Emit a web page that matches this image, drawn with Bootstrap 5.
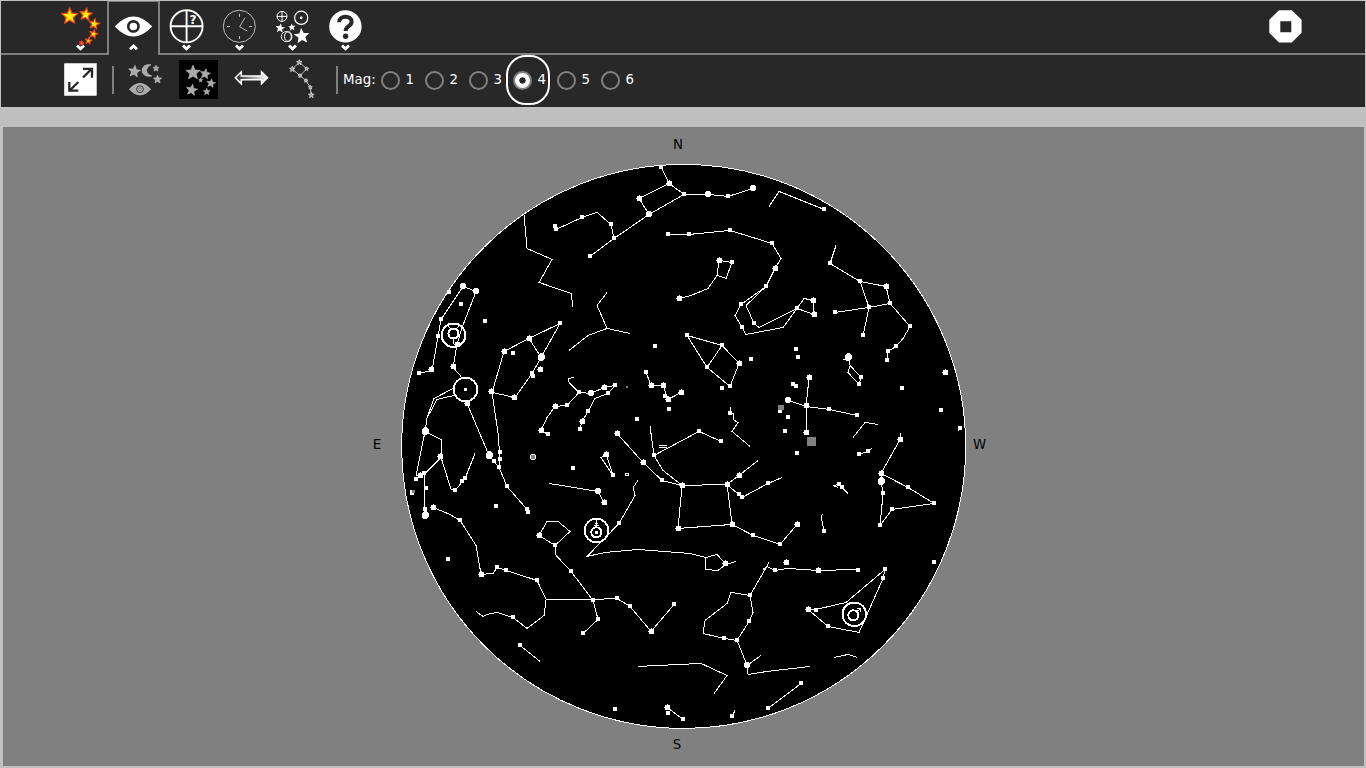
<!DOCTYPE html>
<html lang="en">
<head>
<meta charset="utf-8">
<title>Star Chart</title>
<link href="https://cdn.jsdelivr.net/npm/bootstrap@5.3.0/dist/css/bootstrap.min.css" rel="stylesheet">
<style>
body{background:#c0c0c0;font-family:"DejaVu Sans",sans-serif;font-size:13.33px;overflow:hidden;height:768px}
.bars{background:#282828;margin:1px 1px 0;height:106px;color:#fff}
.tabs-row{height:54px}
.tab-cell{width:53px;height:54px;border-bottom:2px solid #808080}
.tab-cell.on{border:2px solid #808080;border-top-width:1px;border-bottom:0}
.tab-cell svg,.tool svg{display:block;overflow:visible}
.tab-cell.on svg{margin:-1px 0 0 -2px}
.edge{border-bottom:2px solid #808080}
.tools-row{height:52px}
.tool{width:53px;height:52px}
.rule{width:2px;height:28px;background:#808080}
.mag{width:44px;height:50px;padding-left:6.5px;margin:0;line-height:20px}
.mag input{appearance:none;width:19px;height:19px;border:2px solid #808080;border-radius:50%;margin:0 6px 0 0;background:transparent;flex:none}
.mag.on{border:2px solid #fff;border-radius:20px;padding-left:4.5px}
.mag input:checked{background:radial-gradient(circle,#282828 0 2.9px,#fff 3.4px)}
.sky{margin:20px 2px 0 3px;height:639px;background:#808080}
.sky svg{display:block}
.lines{fill:none;stroke:#fff;stroke-width:1;shape-rendering:crispEdges}
</style>
</head>
<body>
<svg width="0" height="0" class="position-absolute"><defs>
<path id="star" d="M0-1 .26-.36 .95-.31 .42.14 .59.81 0 .45-.59.81-.42.14-.95-.31-.26-.36Z" vector-effect="non-scaling-stroke" stroke-linejoin="round"/>
<path id="down" d="M-3.5-1.8 0 1.5 3.5-1.8" fill="none" stroke="#fff" stroke-width="2.9"/>
</defs></svg>
<header class="bars">
<div class="tabs-row d-flex">
  <div class="edge" style="width:53px"></div>
  <div class="tab-cell"><svg width="53" height="52" viewBox="54 1 53 52"><use href="#down" x="80.5" y="47.3"/><g fill="#fe0" stroke="#f04020" stroke-width="1.2">
    <use href="#star" transform="translate(69.7 16.3) scale(8.6)"/><use href="#star" transform="translate(85.8 14.5) rotate(8) scale(6.7)"/><use href="#star" transform="translate(94.2 24) rotate(10) scale(5.6)"/><use href="#star" transform="translate(93.5 34) rotate(15) scale(4.4)"/><use href="#star" transform="translate(88.5 40.8) rotate(10) scale(3.5)"/><use href="#star" transform="translate(81.5 43) rotate(15) scale(2.2)"/></g></svg></div>
  <div class="tab-cell on"><svg width="53" height="52" viewBox="107 1 53 52"><path d="M114.8 26.4Q133.4 6.5 152.2 26.4 133.4 46.5 114.8 26.4Z" fill="#fff"/><circle cx="133.4" cy="26.4" r="5.1" fill="#fff" stroke="#282828" stroke-width="2.7"/><use href="#down" transform="translate(133.5 47.4) scale(1 -1)"/></svg></div>
  <div class="tab-cell"><svg width="53" height="52" viewBox="160 1 53 52"><g fill="none" stroke="#fff" stroke-width="1.9"><circle cx="186.6" cy="26.3" r="16"/><path d="M186.6 10.5v32M170.5 26.3h32"/></g><text x="189.6" y="24" font-size="12" font-weight="bold" fill="#fff">?</text><use href="#down" x="186.5" y="47.3"/></svg></div>
  <div class="tab-cell"><svg width="53" height="52" viewBox="213 1 53 52"><g fill="none" stroke="#bbb" stroke-width="1"><circle cx="239.3" cy="26.3" r="16"/><path d="M245 17.7 239.7 26.7 247.3 31M239.5 13.8v3M239.5 36v3M227 26.5h3M249 26.5h3"/></g><use href="#down" x="239.5" y="47.3"/></svg></div>
  <div class="tab-cell"><svg width="53" height="52" viewBox="266 1 53 52"><g fill="none" stroke="#fff"><circle cx="282" cy="16.4" r="5"/><path d="M277 16.4h10M282 11.4v10"/><circle cx="301.2" cy="17.8" r="6.6" stroke-width="1.2"/><circle cx="286.3" cy="36.6" r="5"/><ellipse cx="288.2" cy="36.6" rx="3.7" ry="4.9"/></g><circle cx="301.2" cy="17.8" r="1.4" fill="#fff"/><g fill="#fff"><use href="#star" transform="translate(280.2 28.3) rotate(8) scale(5)"/><use href="#star" transform="translate(291.9 27.3) rotate(-5) scale(3.9)"/><use href="#star" transform="translate(301.8 36.2) rotate(-5) scale(8.2)"/></g><use href="#down" x="292.5" y="47.3"/></svg></div>
  <div class="tab-cell"><svg width="53" height="52" viewBox="319 1 53 52"><circle cx="345.4" cy="26.4" r="16.2" fill="#fff"/><path d="M339.1 22.2C339.1 14.9 351.6 14.9 351.6 21.7 351.6 26.4 345.6 26 345.6 31" fill="none" stroke="#282828" stroke-width="4"/><circle cx="345.6" cy="36.2" r="2.7" fill="#282828"/><use href="#down" x="345.5" y="47.3"/></svg></div>
  <div class="edge flex-grow-1 d-flex justify-content-end"><svg width="34" height="34" viewBox="0 0 34 34" style="margin:9px 62px 0 0"><path d="M10 .2h12.8l9.8 9.6v13L22.8 32.6H10L.3 22.8v-13Z" fill="#fff"/><path d="M11.3 11.3h11v11h-11z" fill="#282828"/></svg></div>
</div>
<div class="tools-row d-flex">
  <div class="tool" style="margin-left:53px"><svg width="53" height="52" viewBox="54 55 53 52"><path d="M64.2 63.3h32.5v32.5H64.2z" fill="#fff"/><path d="M83 77.5 91.5 69M83 68.8h9v9M78.3 82 70 90.3M69.3 82v8.7h9" fill="none" stroke="#282828" stroke-width="2.3"/></svg></div>
  <div class="rule" style="margin:11px 0 0 5px"></div>
  <div class="tool" style="margin-left:5px"><svg width="53" height="52" viewBox="119 55 53 52"><g fill="#aaa" stroke="#ccc" stroke-width=".5"><use href="#star" transform="translate(134.3 71.5) rotate(8) scale(6.3)"/><use href="#star" transform="translate(156 68.4) scale(3.3)"/><use href="#star" transform="translate(157.5 79.4) scale(4.4)"/><path d="M151 64.8C139 62.5 139 79 152 76 145 74 145 68 151 64.8Z"/><path d="M129.3 89.2Q140 77.5 150.7 89.2 140 101 129.3 89.2Z"/></g><circle cx="140" cy="89.2" r="3.4" fill="none" stroke="#383838"/><circle cx="140" cy="89.2" r="1.5" fill="none" stroke="#666" stroke-width=".6"/></svg></div>
  <div class="tool"><svg width="53" height="52" viewBox="172 55 53 52"><path d="M179 60h39v39h-39z"/><g fill="#aaa" stroke="#bbb" stroke-width=".5"><use href="#star" transform="translate(193 72.7) scale(7.7)"/><use href="#star" transform="translate(205.2 74) rotate(10) scale(5.4)"/><use href="#star" transform="translate(200.7 80.2) scale(2.2)"/><use href="#star" transform="translate(211 83.4) rotate(10) scale(4.6)"/><use href="#star" transform="translate(191.7 90) rotate(10) scale(6)"/><use href="#star" transform="translate(206.7 91.8) scale(3.6)"/></g></svg></div>
  <div class="tool"><svg width="53" height="52" viewBox="225 55 53 52"><defs><linearGradient id="fade"><stop offset="0" stop-color="#282828"/><stop offset="1" stop-color="#fff"/></linearGradient></defs><path d="M235.4 77.8 241.3 71.8V75.9H261.5V71.8L267.6 77.8 261.5 83.8V79.7H241.3V83.8Z" fill="url(#fade)" stroke="#fff" stroke-width="1.5"/></svg></div>
  <div class="tool"><svg width="53" height="52" viewBox="278 55 53 52"><path d="M300 75.7 292.3 69 299.3 62.3 306.7 68.7 300 75.7 306 80.7 310.3 87.3 311.3 95" fill="none" stroke="#bbb"/><g fill="#999" stroke="#ddd" stroke-width=".8"><use href="#star" transform="translate(299.3 62.4) scale(2.8)"/><use href="#star" transform="translate(292.3 69.2) scale(2.9)"/><use href="#star" transform="translate(306.7 68.8) scale(2.1)"/><use href="#star" transform="translate(300 75.7) scale(2.1)"/><use href="#star" transform="translate(306 80.6) scale(2.1)"/><use href="#star" transform="translate(310.3 87.4) scale(2.1)"/><use href="#star" transform="translate(311.3 95.2) scale(3)"/></g></svg></div>
  <div class="rule" style="margin:11px 0 0 5px"></div>
  <div class="d-flex" style="margin-left:5px"><span style="width:31px;line-height:20px;margin-top:15px">Mag:</span>
  <label class="mag d-flex align-items-center"><input type="radio" name="m"><span>1</span></label><label class="mag d-flex align-items-center"><input type="radio" name="m"><span>2</span></label><label class="mag d-flex align-items-center"><input type="radio" name="m"><span>3</span></label><label class="mag on d-flex align-items-center"><input type="radio" name="m" checked><span>4</span></label><label class="mag d-flex align-items-center"><input type="radio" name="m"><span>5</span></label><label class="mag d-flex align-items-center"><input type="radio" name="m"><span>6</span></label></div>
</div>
</header>
<main class="sky">
<svg width="1361" height="639" viewBox="3 127 1361 639">
<circle cx="683.7" cy="446.4" r="282" fill="#000" stroke="#fff" shape-rendering="crispEdges"/>
<g font-size="13.33" text-anchor="middle"><text x="678" y="149">N</text><text x="377" y="449">E</text><text x="979.5" y="449">W</text><text x="677" y="749">S</text></g>
<path class="lines" transform="translate(.05 .45)" d="M661 167 669 183 684 194 708 194 728 196 753 188M669 183 639 198 649 214 684 194M649 214 614 238 590 256M614 238 611 224 597 212 582 217 556 229
M668 234 689 234 730 230 772 243 781 258 775 268 766 286 741 304 735 315 742 327 746 334 783 327 797 308 804 298 813 300 814 314 797 308 759 327 754 323 746 305 766 286
M719 260 732 262 726 278 717 275 719 260M717 275 708 288 691 295 680 298M607 292 597 305 607 328 630 333M607 328 588 335 569 350M769 206 779 191 824 209
M524 215 527 248 552 259 539 282 571 293 573 307M476 291 463 286 441 319 438 336 432 370 419 373M476 291 462 327 457 344 453 367 461 376
M541 357 560 323 529 338 504 351 492 392 515 397 532 373 541 357 529 338M492 392 498 433 500 459 499 467 507 486 527 509M467 403 489 455 499 467
M453 388 434 398 427 417 425 431 441 439 441 457 424 474 425 515M454 395 437 399 430 412 427 417M425 431 416 475M441 457 451 489 455 490 465 478 475 453
M433 507 450 514 460 520 476 545 481 574 493 573 497 567 506 570 537 580 546 599 544 615 527 628 513 617 497 612 487 614 483 616 476 611
M546 599 593 599 617 598 630 606 651 631 674 604M593 600 598 619 583 633M593 600 571 571 556 555 555 545 539 535 547 521 558 521 570 531 555 545M520 645 540 661
M574 377 568 378 569 382 579 392 591 393 604 387 615 385 608 393 595 398 588 411 582 421 580 428M579 392 567 405 555 406 547 417 541 430 548 434M549 483 598 491 604 502
M646 372 651 385 663 385 668 399 681 392M687 335 722 345 739 363 730 386 707 367 687 335M707 367 722 345
M731 406 730 413 733 413 733 419 738 422 732 431 750 446M650 426 654 455 699 431 721 441M654 455 663 470 682 485M617 433 643 462 662 480 682 485 727 484 732 524 678 528 682 485M727 484 739 475 758 460M727 484 742 497 768 483 782 477M659 445h8M659 447h8M625 473h3v2h-3zM606 454 601 457 613 475 606 454
M638 480 633 487 635 495 619 523 587 556 605 552 638 549 690 553 706 557 717 554 726 564 736 561M726 564 718 570 705 569 706 557M732 524 753 535 780 544 797 524
M769 562 750 595 731 592 727 603 705 620 703 633 724 638 737 640 749 621 753 612 750 595M737 640 747 665 761 655M747 665 748 674 767 671 810 666M763 569 767 566 775 570 787 568 818 570 858 569
M638 666 701 663 727 675 714 693M667 707 683 719M732 716 735 710M768 708 801 683M823 514 821 515 824 531M885 569 846 602 816 609 808 609 828 626 859 632 883 578 885 569M834 657 848 654 857 657
M901 432 900 439 881 473 881 481 883 493 880 525 892 509 934 503 908 487 881 473M848 357 850 365 861 377 859 384 848 372 850 365M788 400 806 406 829 409 857 415M809 377 806 406 806 432
M960 426 958 430M853 437 865 422 878 424M859 454 868 451 872 448M833 485 839 484 842 487 848 493M833 485 838 487M843 359h5
M836 245 830 263 860 281 886 286 890 303 910 326 903 338 896 346 888 351 887 360M860 281 869 307 863 335M890 303 869 307 835 312"/>
<g id="stars"></g>
<g shape-rendering="crispEdges" fill="#808080"><path d="M807 437h9v9h-9zM778 405h6v5h-6zM626 386h2v2h-2z"/><path d="M531 454h4v1h1v4h-1v1h-4v-1h-1v-4h1zM410 490h5v3h-1v2h-4z" fill="#fff"/><path d="M531 455h4v4h-4zM412 490h3v3h-3z"/></g>
<g fill="none" stroke="#fff" stroke-width="2" shape-rendering="crispEdges">
<g fill="#000"><circle cx="465.5" cy="389.5" r="11.8"/><circle cx="596.5" cy="530.5" r="11.8"/></g><circle cx="453.5" cy="335.3" r="11.8"/><circle cx="854.3" cy="614.3" r="11.8"/>
<circle cx="453.5" cy="333.5" r="5"/><circle cx="596.3" cy="532.3" r="5"/><circle cx="853.3" cy="615.3" r="5"/>
<path stroke-width="1" d="M448 326.5 451 328.5M459 326.5 456 328.5M453.5 339v5M596.5 520v7M594 525.5h5M595 523.5h3M857 611.5 860.5 608.5M857 608.5h3.5v3.5"/><path stroke-width="3" d="M464 389.5h3M595 532.5h3"/></g>
</svg>
</main>
<script src="https://cdn.jsdelivr.net/npm/bootstrap@5.3.0/dist/js/bootstrap.bundle.min.js"></script>
<script>
// Star positions grouped by apparent brightness
const faint="661,167 684,194 728,196 614,238 590,256 611,224 582,217 555,226 556,229 668,234 689,234 730,230 772,243 766,286 741,304 742,327 754,323 797,308 732,262 824,209 441,319 438,336 419,373 449,292 461,304 485,321 560,323 513,353 532,373 533,376 500,452 500,459 499,467 507,486 527,509 528,512 494,461 455,490 462,481 465,478 424,473 416,479 426,488 425,509 460,520 497,567 506,570 537,580 513,617 593,600 617,598 630,606 674,604 598,619 583,633 571,571 555,545 448,559 496,506 520,645 579,392 615,385 608,393 588,411 580,429 567,405 548,434 573,468 655,346 646,372 665,396 669,409 637,419 687,335 722,345 730,386 707,367 722,388 751,359 730,413 654,455 699,431 721,441 662,480 739,494 742,497 768,483 613,475 619,523 753,535 780,544 750,595 724,638 737,640 749,621 775,570 858,570 615,709 668,713 683,719 732,716 768,708 801,683 824,531 885,569 883,578 816,610 828,626 934,562 883,493 880,525 892,509 934,503 908,487 861,377 859,384 829,409 857,415 796,349 798,357 793,384 796,386 780,411 788,417 785,431 797,453 902,388 941,410 960,428 859,454 868,451 839,484 842,487 830,263 860,281 890,303 910,326 896,346 888,351 887,360 869,307 863,335 835,312";
const medium="669,183 639,198 775,268 719,260 679,298 813,300 814,314 457,344 453,366 504,351 529,338 491,391 514,397 540,369 431,369 467,403 440,456 420,475 433,507 481,574 651,631 539,535 604,387 582,421 555,406 541,430 604,502 651,385 663,385 668,399 681,392 739,363 617,433 643,462 682,485 727,484 732,524 678,528 739,475 606,454 725,563 797,524 786,562 818,570 667,707 808,609 900,439 881,473 809,377 806,405 806,432 945,372 886,286";
const bright="649,214 708,194 753,188 463,286 476,291 541,357 489,455 425,431 425,515 591,393 598,491 747,665 881,481 848,357 788,400";
const at=(list,draw)=>list.split(" ").map(p=>draw(...p.split(",").map(Number))).join("");
document.getElementById("stars").innerHTML=
 `<path fill="#fff" shape-rendering="crispEdges" d="${at(faint,(x,y)=>`M${x-2} ${y-2}h4v4h-4z`)}${at(medium,(x,y)=>`M${x-2} ${y-2}h5v5h-5zM${x} ${y-3}h1v6h-1zM${x-3} ${y}h6v1h-6z`)}${at(bright,(x,y)=>`M${x-2} ${y-3}h4v1h1v4h-1v1h-4v-1h-1v-4h1z${x==541||x==489||x==425||x==881||x==848?`M${x-1} ${y-4}h3v1h1v1h1v4h-1v1h-1v1h-4v-1h-1z`:""}`)}"/>`;
</script>
</body>
</html>
